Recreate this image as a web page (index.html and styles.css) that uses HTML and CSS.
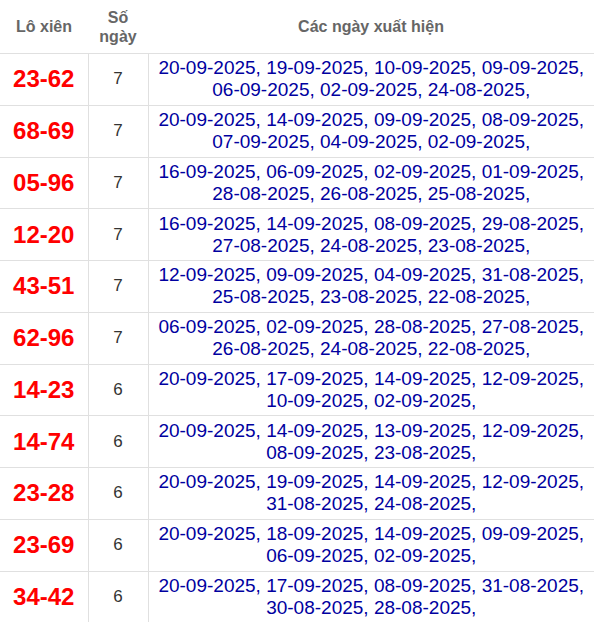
FILE: index.html
```html
<!DOCTYPE html>
<html lang="vi">
<head>
<meta charset="UTF-8">
<meta name="viewport" content="width=device-width, initial-scale=1.0">
<title>Lô xiên</title>
<link rel="stylesheet" href="styles.css">
</head>
<body>
<table class="loxien">
  <thead>
    <tr>
      <th class="col-pair">Lô xiên</th>
      <th class="col-days">Số<br>ngày</th>
      <th>Các ngày xuất hiện</th>
    </tr>
  </thead>
  <tbody>
    <tr>
      <td class="pair">23-62</td>
      <td class="days">7</td>
      <td class="dates">20-09-2025, 19-09-2025, 10-09-2025, 09-09-2025, 06-09-2025, 02-09-2025, 24-08-2025,</td>
    </tr>
    <tr>
      <td class="pair">68-69</td>
      <td class="days">7</td>
      <td class="dates">20-09-2025, 14-09-2025, 09-09-2025, 08-09-2025, 07-09-2025, 04-09-2025, 02-09-2025,</td>
    </tr>
    <tr>
      <td class="pair">05-96</td>
      <td class="days">7</td>
      <td class="dates">16-09-2025, 06-09-2025, 02-09-2025, 01-09-2025, 28-08-2025, 26-08-2025, 25-08-2025,</td>
    </tr>
    <tr>
      <td class="pair">12-20</td>
      <td class="days">7</td>
      <td class="dates">16-09-2025, 14-09-2025, 08-09-2025, 29-08-2025, 27-08-2025, 24-08-2025, 23-08-2025,</td>
    </tr>
    <tr>
      <td class="pair">43-51</td>
      <td class="days">7</td>
      <td class="dates">12-09-2025, 09-09-2025, 04-09-2025, 31-08-2025, 25-08-2025, 23-08-2025, 22-08-2025,</td>
    </tr>
    <tr>
      <td class="pair">62-96</td>
      <td class="days">7</td>
      <td class="dates">06-09-2025, 02-09-2025, 28-08-2025, 27-08-2025, 26-08-2025, 24-08-2025, 22-08-2025,</td>
    </tr>
    <tr>
      <td class="pair">14-23</td>
      <td class="days">6</td>
      <td class="dates">20-09-2025, 17-09-2025, 14-09-2025, 12-09-2025, 10-09-2025, 02-09-2025,</td>
    </tr>
    <tr>
      <td class="pair">14-74</td>
      <td class="days">6</td>
      <td class="dates">20-09-2025, 14-09-2025, 13-09-2025, 12-09-2025, 08-09-2025, 23-08-2025,</td>
    </tr>
    <tr>
      <td class="pair">23-28</td>
      <td class="days">6</td>
      <td class="dates">20-09-2025, 19-09-2025, 14-09-2025, 12-09-2025, 31-08-2025, 24-08-2025,</td>
    </tr>
    <tr>
      <td class="pair">23-69</td>
      <td class="days">6</td>
      <td class="dates">20-09-2025, 18-09-2025, 14-09-2025, 09-09-2025, 06-09-2025, 02-09-2025,</td>
    </tr>
    <tr>
      <td class="pair">34-42</td>
      <td class="days">6</td>
      <td class="dates">20-09-2025, 17-09-2025, 08-09-2025, 31-08-2025, 30-08-2025, 28-08-2025,</td>
    </tr>
  </tbody>
</table>
</body>
</html>
```

FILE: styles.css
```css
body {
  margin: 0;
  background: #fff;
  font-family: "Liberation Sans", Arial, sans-serif;
}
.loxien {
  width: 594px;
  border-collapse: collapse;
  table-layout: fixed;
}
.loxien th {
  height: 53px;
  padding: 0 4px;
  font-size: 16px;
  line-height: 19px;
  font-weight: bold;
  color: #666;
  text-align: center;
  vertical-align: middle;
  border-bottom: 1px solid #e0e0e0;
}
.col-pair {
  width: 80px;
}
.col-days {
  width: 52px;
}
.loxien td {
  padding: 3.375px 4px;
  text-align: center;
  vertical-align: middle;
  border-bottom: 1px solid #e0e0e0;
  border-left: 1px solid #e0e0e0;
}
.loxien td:first-child {
  border-left: none;
}
.pair {
  font-size: 24px;
  font-weight: bold;
  color: #ff0000;
}
.days {
  font-size: 17px;
  color: #333;
}
.dates {
  font-size: 19px;
  line-height: 22px;
  color: #0000a0;
}
```
